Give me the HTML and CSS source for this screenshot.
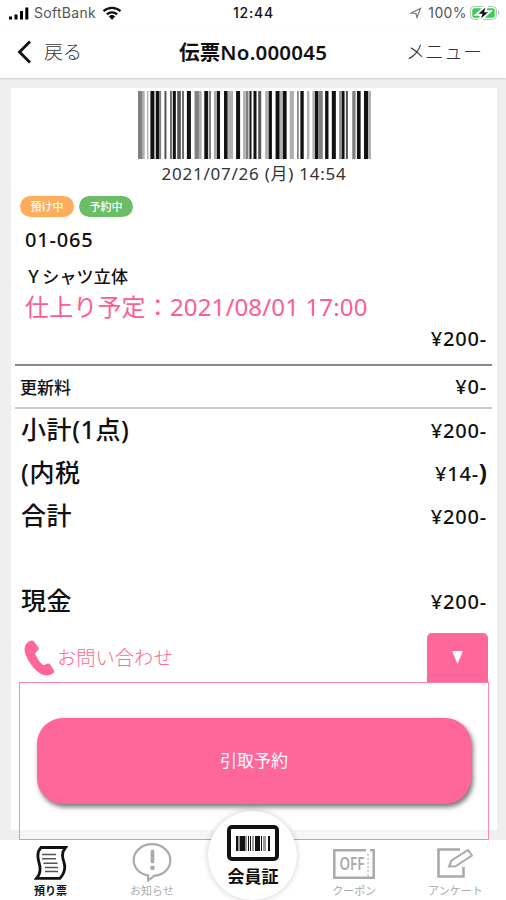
FILE: index.html
```html
<!DOCTYPE html>
<html lang="ja">

<head>
    <meta charset="UTF-8">
    <title>伝票No.000045</title>
    <link rel="stylesheet" href="styles.css">
</head>

<body>
    <div class="status">
        <svg class="signal" width="22" height="13" viewBox="0 0 22 13">
            <path d="M1 9.500h3v3H1zM6.500 7.500h3v5h-3zM12 4h3v8.500h-3zM17.300 0.500h3v12h-3z" />
        </svg>
        <span class="carrier">SoftBank</span>
        <svg class="wifi" width="20" height="14" viewBox="0 0 20 14">
            <path d="M1.500 5.200a12.500 12.500 0 0 1 17 0M4.800 8.300a7.800 7.800 0 0 1 10.400 0" fill="none" stroke="#111" stroke-width="2.300" />
            <path d="M6.800 10.500a4.800 4.800 0 0 1 6.400 0L10 13.700z" />
        </svg>
        <span class="clock">12:44</span>
        <svg class="arrow" width="12" height="12" viewBox="0 0 12 12">
            <path d="M1 6l9.500-4.500L7 10.500 6 6.500z" fill="none" stroke="#777" stroke-width="1.200" />
        </svg>
        <span class="percent">100%</span>
        <svg class="battery" width="30" height="14" viewBox="0 0 30 14">
            <rect x="0.600" y="0.600" width="25.800" height="12.800" rx="3.500" fill="#fff" stroke="#bbb" />
            <rect x="2.300" y="2.300" width="22.400" height="9.400" rx="2" fill="#2fd14f" />
            <path d="M28 4.500q2.500 2.500 0 5z" fill="#bbb" />
            <path d="M15.500 1.500L8.500 7.800h4l-1.500 4.700 7-6.300h-4z" fill="#fff" stroke="#fff" stroke-width="4" />
            <path d="M15.500 1.500L8.500 7.800h4l-1.500 4.700 7-6.300h-4z" fill="#111" />
        </svg>
    </div>

    <div class="header">
        <a class="back">
            <svg width="15" height="24" viewBox="0 0 15 24">
                <path d="M13 1.500L2.500 12 13 22.500" fill="none" stroke="#111" stroke-width="2.800" />
            </svg>
            <span>戻る</span>
        </a>
        <h1>伝票No.000045</h1>
        <a class="menu">メニュー</a>
    </div>

    <div class="main">
        <div class="card">
            <svg class="barcode" viewBox="52 0 696 1" preserveAspectRatio="none">
                <path fill="#111" d="M89 0h12v1h-12zM105 0h11v1h-11zM156 0h9v1h-9zM198 0h12v1h-12zM250 0h11v1h-11zM287 0h10v1h-10zM309 0h11v1h-11zM345 0h12v1h-12zM385 0h6v1h-6zM397 0h9v1h-9zM442 0h10v1h-10zM463 0h12v1h-12zM484 0h12v1h-12zM537 0h10v1h-10zM580 0h11v1h-11zM611 0h10v1h-10zM631 0h12v1h-12zM660 0h9v1h-9zM706 0h11v1h-11zM727 0h13v1h-13z" />
                <path fill="#555" d="M131 0h6v1h-6zM148 0h5v1h-5zM169 0h11v1h-11zM184 0h5v1h-5zM673 0h6v1h-6zM411 0h9v1h-9z" />
                <path fill="#808080" d="M52 0h14v1h-14zM116 0h5v1h-5zM263 0h7v1h-7zM280 0h4v1h-4zM221 0h13v1h-13zM374 0h8v1h-8zM527 0h5v1h-5zM591 0h13v1h-13zM653 0h5v1h-5zM692 0h10v1h-10z" />
                <path fill="#b0b0b0" d="M66 0h6v1h-6zM79 0h4v1h-4zM234 0h8v1h-8zM320 0h16v1h-16zM366 0h8v1h-8zM432 0h8v1h-8zM476 0h7v1h-7zM505 0h13v1h-13zM557 0h7v1h-7zM573 0h7v1h-7zM742 0h6v1h-6z" />
            </svg>
            <p class="date">2021/07/26 (月) 14:54</p>

            <div class="badges">
                <span class="badge orange">預け中</span>
                <span class="badge green">予約中</span>
            </div>
            <p class="tag">01-065</p>
            <p class="item">Ｙシャツ立体</p>
            <p class="finish">仕上り予定：2021/08/01 17:00</p>
            <p class="price item-price">¥200-</p>

            <div class="row fee">
                <span class="small">更新料</span>
                <span class="price">¥0-</span>
            </div>
            <div class="row">
                <span class="label">小計(1点)</span>
                <span class="price">¥200-</span>
            </div>
            <div class="row">
                <span class="label">(内税</span>
                <span class="price">¥14-<b>)</b></span>
            </div>
            <div class="row">
                <span class="label">合計</span>
                <span class="price">¥200-</span>
            </div>
            <div class="row cash">
                <span class="label">現金</span>
                <span class="price">¥200-</span>
            </div>

            <div class="contact">
                <a class="tel">
                    <svg width="31" height="36" viewBox="0 0 31 36">
                        <path d="M3.500 2.500C6 .3 8.500-.2 10 1.600l4 5.200c1.300 1.700.7 3.200-1 4.500-1.700 1.200-2 2.300-1.200 3.900 1.700 3.600 3.600 6.300 6.200 8.900 1.200 1.200 2.200 1.300 3.600.3 2-1.400 3.500-1.300 4.700.4l3.500 5.200c1.200 2-.2 3.300-2.800 4.400-4 1.600-8.400 1.200-11.600-1.300C9 28.200 4.500 22.200 1.600 14.500-.1 9.800.1 5.600 3.500 2.500z" />
                    </svg>
                    <span>お問い合わせ</span>
                </a>
                <div class="toggle">
                    <svg width="11" height="13" viewBox="0 0 11 13">
                        <path d="M0 0h11L5.500 13z" />
                    </svg>
                </div>
            </div>
            <div class="panel">
                <a class="reserve">引取予約</a>
            </div>
        </div>
    </div>

    <div class="tabs">
        <a class="tab current">
            <svg width="34" height="34" viewBox="0 0 34 34" fill="none">
                <path d="M7 1.500h24.500c-4.500 5.500-3 10-1.500 15s.5 11-4 15.800H2.500C7.500 27 6.500 21.500 5 16.500S2.500 6 7 1.500z" stroke="#111" stroke-width="2.800" />
                <path d="M8 8.500h14M8 12.800h14M9.500 17.200h14M11 21.500h13M11 25.500h13" stroke="#555" stroke-width="1.500" />
            </svg>
            <span>預り票</span>
        </a>
        <a class="tab">
            <svg width="40" height="39" viewBox="0 0 40 40" fill="none" stroke="#aaa">
                <path d="M16 33.200C7.500 31.800 1.200 25.500 1.200 17.700 1.200 8.600 9.600 1.200 20 1.200s18.800 7.400 18.800 16.500S31 33 22.500 33.500L16 38.500z" stroke-width="2.200" />
                <path d="M20.500 8.500v10.500" stroke-width="3.800" stroke-linecap="round" />
                <circle cx="20.500" cy="25.500" r="2.400" fill="#aaa" stroke="none" />
            </svg>
            <span>お知らせ</span>
        </a>
        <a class="tab member">
            <svg width="52" height="36" viewBox="0 0 52 36">
                <rect x="2" y="2" width="48" height="32" rx="3" fill="none" stroke="#111" stroke-width="4" />
                <path fill="#111" d="M9 11h2v15H9zM13 11h5v15h-5zM21 11h1v15h-1zM23 11h1v15h-1zM28 11h5v15h-5zM34 11h1v15h-1zM41 11h2v15h-2z" />
                <path fill="#999" d="M18 11h2v15h-2zM25 11h2v15h-2zM36 11h3v15h-3zM11 11h2v15h-2z" />
            </svg>
            <span>会員証</span>
        </a>
        <a class="tab raised">
            <svg width="42" height="30" viewBox="0 0 42 30" fill="none" stroke="#aaa" stroke-width="2.500">
                <path d="M33 1.300H1.300v27.400h39.400V1.300H37" />
                <path d="M35 5v22" stroke-width="1" stroke-dasharray="2 2" />
                <text x="6.500" y="20.500" textLength="25" lengthAdjust="spacingAndGlyphs">OFF</text>
            </svg>
            <span>クーポン</span>
        </a>
        <a class="tab raised">
            <svg width="36" height="32" viewBox="0 0 36 32" fill="none" stroke="#aaa" stroke-width="2.600">
                <path d="M23 2.500H1.500v27h25V20" />
                <path d="M12 19.500l2.500-6L31 3l4 5.500-16.500 10.800z" stroke-width="2" />
            </svg>
            <span>アンケート</span>
        </a>
    </div>
</body>

</html>
```

FILE: styles.css
```css
body,
div,
p,
h1 {
    margin: 0;
    padding: 0;
}

body {
    display: flex;
    flex-direction: column;
    height: 900px;
    overflow: hidden;
    background: #efefef;
    color: #111;
    font-family: "Noto Sans", "Noto Sans CJK JP", sans-serif;
}

svg {
    display: block;
    flex: none;
}

/* status bar */
.status {
    display: flex;
    align-items: center;
    height: 26px;
    padding: 0 6px 0 8px;
    background: #fff;
    font: 14px/26px Inter, sans-serif;
}

.carrier {
    width: 63px;
    margin: 0 5px 0 4px;
    color: #555;
    letter-spacing: .3px;
}

.clock {
    margin-left: 111px;
    width: 42px;
    font-weight: 500;
    letter-spacing: .8px;
}

.arrow {
    margin-left: auto;
}

.percent {
    margin: 0 3px 0 6px;
    color: #555;
    letter-spacing: .4px;
}

/* header */
.header {
    display: grid;
    grid-template-columns: 1fr auto 1fr;
    align-items: center;
    height: 52px;
    padding: 0 17px;
    background: #fff;
    box-shadow: 0 1px 2px #ccc;
    color: #333;
    font-size: 19px;
    font-weight: 300;
    line-height: 52px;
}

.back {
    display: flex;
    align-items: center;
    gap: 12px;
}

.header h1 {
    color: #111;
    font-size: 20.5px;
    font-weight: 600;
    letter-spacing: .2px;
}

.menu {
    padding-right: 7px;
    text-align: right;
}

/* slip */
.main {
    flex: 1;
    padding: 10px 9px 0 11px;
}

.card {
    display: flex;
    flex-direction: column;
    height: 739px;
    padding-top: 3px;
    background: #fff;
}

.card > * {
    flex: none;
}

.barcode {
    align-self: center;
    width: 233px;
    height: 68px;
}

.date {
    text-align: center;
    color: #333;
    font-size: 17px;
    line-height: 30px;
    letter-spacing: .75px;
}

.badges {
    display: flex;
    gap: 5px;
    padding: 7px 9px 0;
}

.badge {
    width: 54px;
    height: 21px;
    border-radius: 11px;
    color: #fff;
    font-size: 11px;
    font-weight: 500;
    line-height: 21px;
    text-align: center;
}

.orange {
    background: #ffad5c;
}

.green {
    background: #6cbd66;
}

.tag,
.price {
    font-size: 20px;
    font-weight: 500;
    letter-spacing: .8px;
}

.tag {
    padding: 4px 14px 0;
    line-height: 38px;
}

.item {
    padding: 1px 14px 0;
    font-size: 17px;
    font-weight: 500;
    line-height: 34px;
    letter-spacing: .2px;
}

.finish {
    padding: 0 14px 2px;
    color: #ff5c93;
    font-size: 24px;
    font-weight: 400;
    line-height: 25px;
    letter-spacing: .15px;
}

.item-price {
    padding-right: 10px;
    line-height: 36px;
    text-align: right;
}

.row {
    display: flex;
    justify-content: space-between;
    align-items: center;
    height: 43px;
    margin: 0 5px 0 4px;
    padding: 0 5px;
}

.fee {
    height: 41px;
    margin-top: 7px;
    border-top: 2px solid #888;
    border-bottom: 2px solid #ccc;
}

.small {
    font-size: 17px;
    font-weight: 500;
}

.label {
    padding: 0 0 5px 1px;
    font-size: 25px;
    font-weight: 500;
    letter-spacing: .6px;
}

.row .price {
    padding-bottom: 1px;
}

.price b {
    font-size: 24px;
    line-height: 1;
    letter-spacing: 0;
}

.cash {
    margin-top: 42px;
}

.contact {
    display: flex;
    justify-content: space-between;
    margin: 10px 9px 0 13px;
}

.tel {
    display: flex;
    align-items: center;
    gap: 2px;
    color: #ff6699;
    font-size: 19.3px;
    font-weight: 300;
}

.tel svg {
    fill: #ff6699;
}

.tel span {
    padding-bottom: 2px;
}

.toggle {
    display: flex;
    justify-content: center;
    align-items: center;
    width: 61px;
    height: 49px;
    border-radius: 5px 5px 0 0;
    background: #ff6699;
}

.toggle svg {
    fill: #fff;
}

/* hangs a little below the card */
.panel {
    height: 156px;
    margin: 0 8px;
    border: 1px solid #ff86ac;
    background: rgba(255, 255, 255, .45);
}

.reserve {
    display: block;
    height: 86px;
    margin: 35px 17px 0;
    border-radius: 26px;
    background: #ff6699;
    box-shadow: 2px 3px 5px rgba(0, 0, 0, .55);
    color: #fff;
    font-size: 17px;
    line-height: 86px;
    text-align: center;
}

/* tab bar */
.tabs {
    display: grid;
    grid-template-columns: repeat(5, 1fr);
    height: 60px;
    background: #fff;
}

.tab {
    display: flex;
    flex-direction: column;
    justify-content: flex-end;
    align-items: center;
    height: 60px;
    color: #aaa;
    font-size: 11px;
    line-height: 18px;
}

.tab text {
    fill: #aaa;
    stroke: none;
    font: 600 17px "Noto Sans", sans-serif;
}

.raised {
    gap: 3px;
}

.current {
    gap: 2px;
    color: #111;
    font-weight: 700;
}

.member {
    box-sizing: border-box;
    justify-self: center;
    gap: 3px;
    width: 89px;
    height: 89px;
    margin-top: -29px;
    padding-bottom: 10px;
    border-radius: 50%;
    background: #fff;
    box-shadow: 0 0 6px rgba(0, 0, 0, .2);
    color: #111;
    font-size: 17px;
    font-weight: 700;
    line-height: 26px;
}
```
